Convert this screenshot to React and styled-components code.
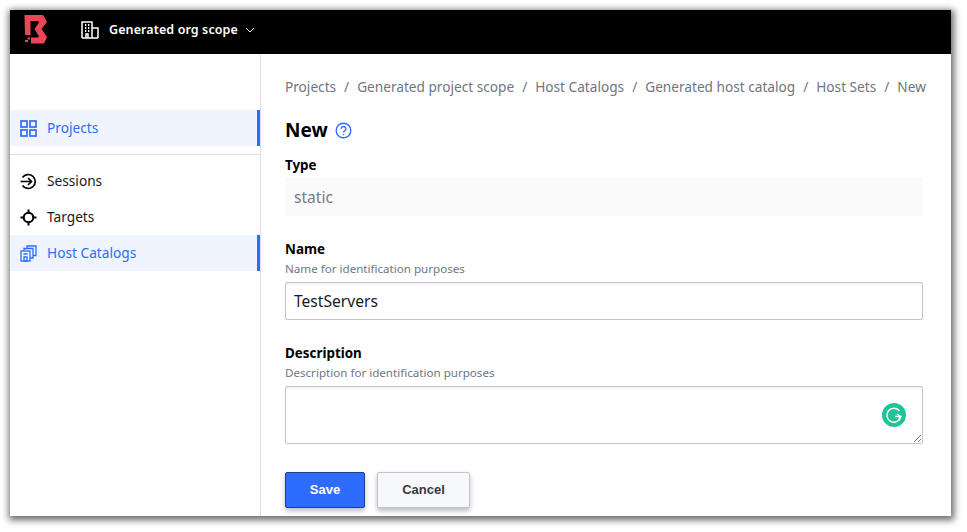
import React from 'react';
import styled, { createGlobalStyle } from 'styled-components';

const GlobalStyle = createGlobalStyle`
    html, body {
        margin: 0;
        padding: 0;
        background: #ffffff;
        height: 532px;
        overflow: hidden;
    }
    * {
        box-sizing: border-box;
    }
`;

const Page = styled.div`
    padding: 10px 16px 16px 10px;
    height: 532px;
    font-family: "Noto Sans", "Open Sans", sans-serif;
`;
const Window = styled.div`
    width: 941px;
    height: 506px;
    display: flex;
    flex-direction: column;
    background: #ffffff;
    overflow: hidden;
    box-shadow: 1px 2px 7px 2px rgba(0, 0, 0, 0.6);
`;
const Header = styled.header`
    flex: 0 0 44px;
    display: flex;
    align-items: center;
    background: #000000;
    padding: 0 0 5px 14px;
    color: #ffffff;
`;
const OrgIcon = styled.svg`
    width: 18px;
    height: 18px;
    margin-left: 33px;
    margin-right: 10px;
`;
const OrgName = styled.span`
    font-size: 12.5px;
    font-weight: 600;
    letter-spacing: 0.1px;
`;
const Caret = styled.svg`
    width: 10px;
    height: 6px;
    margin-left: 7px;
`;
const Body = styled.div`
    flex: 1;
    display: flex;
    min-height: 0;
`;
const Sidebar = styled.nav`
    flex: 0 0 251px;
    border-right: 1px solid #dce0e8;
    padding-top: 56px;
`;
const NavItem = styled.div`
    height: 36px;
    display: flex;
    align-items: center;
    padding: 0 0 2px 10px;
    gap: 10px;
    font-size: 13.7px;
    color: ${props => (props.$active ? '#2f6df6' : '#1a1a1a')};
    background: ${props => (props.$active ? '#eff4fe' : 'transparent')};
    border-right: 3px solid ${props => (props.$active ? '#2f6df6' : 'transparent')};
`;
const NavIcon = styled.svg`
    width: 17px;
    height: 17px;
    flex: none;
    margin-top: 2px;
`;
const Divider = styled.hr`
    margin: 8px 0 8px;
    border: 0;
    border-top: 1px solid #dce0e8;
`;
const Main = styled.main`
    flex: 1;
    min-width: 0;
    padding: 23px 28px 0 24px;
`;
const Crumbs = styled.div`
    display: flex;
    font-size: 13.65px;
    line-height: 20px;
    color: #6f7682;
    white-space: nowrap;
`;
const Slash = styled.span`
    margin: 0 8px;
`;
const TitleRow = styled.div`
    display: flex;
    align-items: center;
    gap: 7px;
    margin: 20px 0 13px;
    height: 26px;
`;
const Title = styled.h1`
    margin: 0;
    font-size: 19px;
    font-weight: 700;
    color: #000000;
`;
const HelpIcon = styled.svg`
    width: 17px;
    height: 17px;
`;
const Field = styled.div`
    margin-bottom: ${props => props.$gap || 0}px;
`;
const Label = styled.div`
    font-size: 13.4px;
    line-height: 18px;
    font-weight: 700;
    color: #000000;
`;
const Hint = styled.div`
    font-size: 11.6px;
    line-height: 16px;
    color: #6f7682;
    margin: 3px 0 5px;
`;
const ReadOnly = styled.div`
    height: 38px;
    margin-top: 4px;
    padding: 0 9px;
    display: flex;
    align-items: center;
    background: #fafafa;
    font-size: 15.6px;
    color: #757b85;
`;
const Input = styled.div`
    height: 38px;
    padding: 0 8px;
    display: flex;
    align-items: center;
    background: #ffffff;
    border: 1px solid #bfc4d2;
    border-radius: 2px;
    font-size: 15.6px;
    color: #1a1a1a;
    box-shadow: inset 0 2px 2px #f4f4f6;
`;
const TextArea = styled.div`
    position: relative;
    height: 58px;
    background: #ffffff;
    border: 1px solid #bfc4d2;
    border-radius: 2px;
    box-shadow: inset 0 2px 2px #f4f4f6;
`;
const Grammarly = styled.svg`
    position: absolute;
    right: 16px;
    top: 16px;
    width: 24px;
    height: 24px;
`;
const Grip = styled.svg`
    position: absolute;
    right: 0;
    bottom: 0;
    width: 9px;
    height: 9px;
`;
const Actions = styled.div`
    display: flex;
    gap: 12px;
    margin-top: 28px;
`;
const Button = styled.button`
    width: ${props => (props.$primary ? 80 : 93)}px;
    height: 36px;
    padding: 0 0 2px;
    border-radius: 2px;
    border: 1px solid ${props => (props.$primary ? '#1c3f94' : '#bfc4d2')};
    background: ${props => (props.$primary ? '#2e6bff' : '#f7f8fa')};
    color: ${props => (props.$primary ? '#ffffff' : '#373a42')};
    font-family: "Liberation Sans", Arial, sans-serif;
    font-size: 13px;
    font-weight: 700;
    box-shadow: 0 3px 5px rgba(60, 70, 90, 0.35);
`;

const BLUE = '#2f6df6';
const crumbs = ['Projects', 'Generated project scope', 'Host Catalogs', 'Generated host catalog', 'Host Sets', 'New'];

function Logo() {
    return (
        <svg width="24" height="29" viewBox="0 0 24 29" fill="#ec4558">
            <path d="M.5 0H19l4 7-5.500 7 5.500 8-3 6.500H7v-6h7l1-1L10.500 14 15 7.500 14 6H6.500v14H1z" />
            <rect x="1" y="25" width="3" height="2" />
            <rect x="3.500" y="22.500" width="2.500" height="2" />
        </svg>
    );
}

export default function App() {
    return (
        <Page>
            <GlobalStyle />
            <Window>
                <Header>
                    <Logo />
                    <OrgIcon viewBox="0 0 18 18" fill="none" stroke="#ffffff" strokeWidth="1.5">
                        <path d="M1 17V1h10v16M11 7h6v10M1 17h16M5 17v-4h2v4" />
                        <path d="M4 4h1.300M7 4h1.300M4 7h1.300M7 7h1.300M4 10h1.300M7 10h1.300" strokeWidth="1.800" />
                    </OrgIcon>
                    <OrgName>Generated org scope</OrgName>
                    <Caret viewBox="0 0 10 6" fill="none" stroke="#ffffff" strokeWidth="1">
                        <path d="M1 1l4 4 4-4" />
                    </Caret>
                </Header>
                <Body>
                    <Sidebar>
                        <NavItem $active>
                            <NavIcon viewBox="0 0 17 17" fill="none" stroke={BLUE} strokeWidth="1.700">
                                <rect x="1" y="1" width="6" height="6" />
                                <rect x="10" y="1" width="6" height="6" />
                                <rect x="1" y="10" width="6" height="6" />
                                <rect x="10" y="10" width="6" height="6" />
                            </NavIcon>
                            Projects
                        </NavItem>
                        <Divider />
                        <NavItem>
                            <NavIcon viewBox="0 0 17 17" fill="none" stroke="#000000" strokeWidth="1.700">
                                <path d="M2.500 4.500A7 7 0 1 1 2.500 12.500" />
                                <path d="M.5 8.500h11M8 5l3.500 3.500L8 12" />
                            </NavIcon>
                            Sessions
                        </NavItem>
                        <NavItem>
                            <NavIcon viewBox="0 0 17 17" fill="none" stroke="#000000" strokeWidth="2">
                                <circle cx="8.500" cy="8.500" r="4.800" />
                                <path d="M8.500 .5v4M8.500 12.500v4M.5 8.500h4M12.500 8.500h4" />
                            </NavIcon>
                            Targets
                        </NavItem>
                        <NavItem $active>
                            <NavIcon viewBox="0 0 17 17" fill="none" stroke={BLUE} strokeWidth="1.300">
                                <rect x="1" y="6" width="9" height="10" />
                                <path d="M4 6V3.500h9V13h-3M7 3.500V1h9v9.500h-3" />
                                <path d="M3.500 9h4M4 12h3v4H4z" />
                            </NavIcon>
                            Host Catalogs
                        </NavItem>
                    </Sidebar>
                    <Main>
                        <Crumbs>
                            {crumbs.map((c, i) => (
                                <React.Fragment key={c}>
                                    {i > 0 && <Slash>/</Slash>}
                                    <span>{c}</span>
                                </React.Fragment>
                            ))}
                        </Crumbs>
                        <TitleRow>
                            <Title>New</Title>
                            <HelpIcon viewBox="0 0 17 17" fill="none" stroke={BLUE} strokeWidth="1.400">
                                <circle cx="8.500" cy="8.500" r="7.300" />
                                <path d="M6.200 6.800a2.300 2.300 0 1 1 3.400 2c-.8.500-1.100.9-1.100 1.700" />
                                <path d="M8.500 12v1.200" />
                            </HelpIcon>
                        </TitleRow>
                        <Field $gap={24}>
                            <Label>Type</Label>
                            <ReadOnly>static</ReadOnly>
                        </Field>
                        <Field $gap={24}>
                            <Label>Name</Label>
                            <Hint>Name for identification purposes</Hint>
                            <Input>TestServers</Input>
                        </Field>
                        <Field>
                            <Label>Description</Label>
                            <Hint>Description for identification purposes</Hint>
                            <TextArea>
                                <Grammarly viewBox="0 0 24 24">
                                    <circle cx="12" cy="12" r="12" fill="#22c497" />
                                    <path d="M17.500 8A7 7 0 1 0 18.800 13.500H13" fill="none" stroke="#ffffff" strokeWidth="1.500" />
                                    <path d="M15 11l3.500 2.500-2 3.500" fill="none" stroke="#ffffff" strokeWidth="1.400" />
                                </Grammarly>
                                <Grip viewBox="0 0 9 9" stroke="#555555" strokeWidth="0.800">
                                    <path d="M1 8l7-7M5 8l3-3" />
                                </Grip>
                            </TextArea>
                        </Field>
                        <Actions>
                            <Button $primary>Save</Button>
                            <Button>Cancel</Button>
                        </Actions>
                    </Main>
                </Body>
            </Window>
        </Page>
    );
}
